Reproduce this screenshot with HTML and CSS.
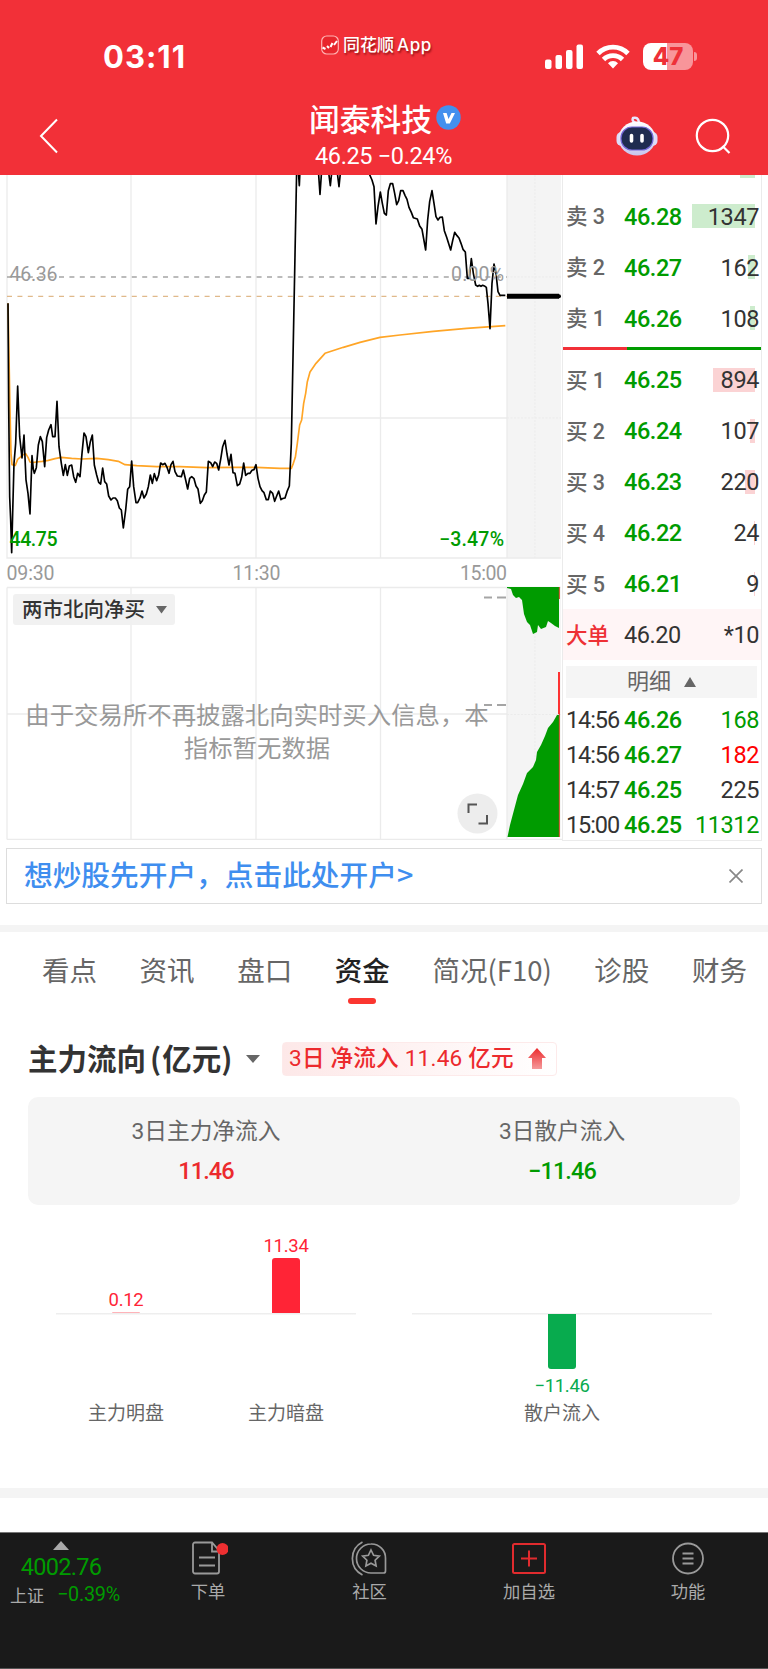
FILE: index.html
```
<!DOCTYPE html>
<html lang="zh-CN">
<head>
  <meta charset="UTF-8">
  <meta name="viewport" content="width=device-width, initial-scale=1.0">
  <title>闻泰科技</title>
  <link rel="stylesheet" href="styles.css">
</head>
<body>
  <header class="header">
    <div class="status">
      <div class="time">03:11</div>
      <div class="app-mark">
        <svg width="18" height="20" viewBox="0 0 18 20">
          <rect x="0.7" y="1" width="16.6" height="18" rx="5" fill="#e8262d" stroke="#ffb3b3" stroke-width="1.2"/>
          <path d="M1.500 12.500l3 1.500M6 11l2 2M9.500 12l2-4M13 10l3-4" fill="none" stroke="#fff" stroke-width="2"/>
        </svg>
        <span>同花顺<span class="app-word">App</span></span>
      </div>
      <div class="status-icons">
        <svg width="39" height="26" viewBox="0 0 39 26" fill="#fff">
          <rect x="0" y="15.5" width="6.5" height="9.5" rx="2"/>
          <rect x="10.5" y="11" width="6.5" height="14" rx="2"/>
          <rect x="21" y="6" width="6.5" height="19" rx="2"/>
          <rect x="31.5" y="0.5" width="6.5" height="24.5" rx="2"/>
        </svg>
        <svg class="wifi" width="34" height="25" viewBox="0 0 34 25" fill="none" stroke="#fff" stroke-width="4.8">
          <path d="M2 9.5a21 21 0 0 1 30 0"/>
          <path d="M7.5 15.500a13.4 13.4 0 0 1 19 0"/>
          <path d="M17 24.5l-5-5.3a7 7 0 0 1 10 0z" fill="#fff" stroke="none"/>
        </svg>
        <div class="battery"><span>47</span></div>
      </div>
    </div>
    <div class="nav">
      <svg class="back" width="20" height="36" viewBox="0 0 20 36"><path d="M18 1.500L2 18l16 16.500" fill="none" stroke="#fff" stroke-width="2"/></svg>
      <div class="stock">
        <div class="stock-name">闻泰科技
          <svg width="25" height="25" viewBox="0 0 25 25"><circle cx="12.500" cy="12.500" r="12.200" fill="#4390ee"/><path d="M7 8h3.600l1.900 6 3-6H19l-5.200 10.500h-3.600z" fill="#fff"/></svg>
        </div>
        <div class="stock-price">46.25 −0.24%</div>
      </div>
      <div class="nav-actions">
        <svg width="42" height="40" viewBox="0 0 42 40">
          <defs>
            <linearGradient id="shell" x1="0" y1="0" x2="0" y2="1"><stop offset="0" stop-color="#fff"/><stop offset="1" stop-color="#c8c5ee"/></linearGradient>
          </defs>
          <path d="M20 7c-3-1-4-3-3-5 3-1 5 0 6 4" fill="none" stroke="#e9e6ff" stroke-width="2.500"/>
          <rect x="0.500" y="16" width="41" height="14" rx="5" fill="#dcdcfa"/>
          <ellipse cx="21" cy="22.500" rx="18.500" ry="17" fill="url(#shell)"/>
          <rect x="5" y="11" width="32" height="23" rx="11" fill="#1f2c50" stroke="#7468d8" stroke-width="1.200"/>
          <path d="M15.500 19.500v5.500M26 19.500v5.500" stroke="#fff" stroke-width="3.600" stroke-linecap="round"/>
        </svg>
        <svg width="36" height="36" viewBox="0 0 36 36" fill="none" stroke="#fff" stroke-width="2.200"><circle cx="17.500" cy="17.500" r="15.700"/><path d="M27.500 28l7 7"/></svg>
      </div>
    </div>
  </header>

  <main>
    <section class="quote">
      <!-- y = 0 in the drawing lies 5px above the visible area -->
      <svg class="chart" width="562" height="665" viewBox="0 5 562 665">
        <rect x="507" y="5" width="54" height="383" fill="#f4f4f4"/>
        <rect x="507" y="417" width="54" height="250" fill="#f4f4f4"/>
        <g stroke="#ebebeb" stroke-width="1.300" fill="none">
          <path d="M7 0v388H561M131 0v388M256 0v388M380.500 0v388M507 0v388M7 248H507"/>
          <path d="M7 417.500H561M7 417.500V669.500M131 417v252M256 417v252M380.500 417v252M507 417v252M7 544H507M7 669.500H562"/>
          <path d="M535 5v383M535 417v250M507 248h54M507 107h54M507 544.500h54" stroke-dasharray="2 1.500" stroke-width="1"/>
        </g>
        <path d="M7 107H507" stroke="#a5a5a5" stroke-width="1.300" stroke-dasharray="5 5.400"/>
        <path d="M7 126.400H507" stroke="#e0b98a" stroke-width="1.200" stroke-dasharray="5 5.400"/>
        <path d="M507 126.300H559" stroke="#000" stroke-width="5"/><circle cx="559" cy="126.300" r="2" />
        <g transform="scale(.33333)" fill="none" stroke-width="5" stroke-linejoin="round">
          <polyline stroke="#ffa526" points="24,400 27,560 30,720 33,850 36,884 46,886 53,868 60,862 66,856 77,851 84,862 90,876 97,878 109,876 127,874 145,871 165,866 184,862 215,865 245,867 290,865 325,869 355,874 375,884 410,887 470,890 540,890 620,893 700,892 768,892 840,895 874,895 880,880 886,862 892,820 899,765 905,750 911,700 917,670 922,635 930,606 948,580 975,550 1030,532 1080,517 1140,502 1200,495 1300,484 1400,475 1516,467"/>
          <polyline stroke="#000" points="24,400 26,700 29,980 32,1050 35,1148 38,1030 42,880 47,820 53,648 59,800 66,864 72,795 78,930 84,970 90,1032 96,857 100,898 103,910 109,893 115,825 121,800 127,815 134,890 140,803 146,780 153,764 158,800 165,800 171,694 177,830 184,880 190,916 196,884 202,916 208,888 215,885 221,920 227,937 233,910 240,920 246,850 252,789 258,800 265,848 271,815 277,795 283,885 290,915 296,937 302,942 308,894 314,935 320,942 326,978 333,990 339,984 346,984 352,992 358,1014 364,1020 370,1074 377,1020 383,958 389,950 395,873 401,950 408,998 413,998 420,984 426,963 432,984 439,972 445,950 451,915 457,940 463,911 470,932 476,915 482,879 488,884 495,880 501,892 507,910 513,884 519,874 525,905 532,918 544,920 550,900 557,930 563,957 569,925 575,920 582,926 588,948 594,957 601,1000 607,992 613,975 619,966 625,874 632,878 638,890 644,876 650,880 656,900 662,868 668,830 675,811 681,852 687,885 693,853 699,908 705,910 712,947 719,942 725,922 731,879 737,916 744,910 750,910 756,901 762,899 768,884 774,925 780,950 786,962 792,968 799,989 805,989 811,963 818,970 824,994 830,978 836,963 843,989 849,985 855,984 861,965 868,948 874,820 890,0 895,0 898,47 900,0 955,0 960,73 965,0 985,0 991,47 996,0 1011,0 1017,50 1022,0 1106,0 1108,12 1116,30 1122,50 1128,162 1134,110 1141,66 1147,100 1153,130 1159,135 1165,62 1171,41 1178,41 1184,70 1190,104 1196,92 1202,62 1209,62 1215,76 1221,88 1227,112 1234,127 1240,143 1252,147 1259,168 1266,178 1277,240 1283,150 1289,95 1296,62 1302,100 1308,140 1314,150 1320,142 1327,141 1333,182 1340,202 1352,240 1358,212 1364,187 1371,197 1377,204 1383,220 1389,238 1396,246 1402,325 1408,325 1414,266 1420,310 1427,345 1433,349 1438,346 1443,349 1448,346 1455,349 1459,352 1464,400 1470,476 1476,340 1482,282 1488,310 1494,365 1500,376 1516,376"/>
        </g>
        <g class="chart-label">
          <text x="9.500" y="110.500" textLength="48">46.36</text>
          <text x="451" y="110.500" textLength="53">0.00%</text>
          <text class="down" x="9.500" y="376" textLength="48">44.75</text>
          <text class="down" x="439" y="376" textLength="65">−3.47%</text>
          <text x="6.500" y="409.500" textLength="48">09:30</text>
          <text x="232.500" y="409.500" textLength="48">11:30</text>
          <text x="460" y="409.500" textLength="47">15:00</text>
        </g>
        <!-- northbound net buying -->
        <path d="M484 427.500h8M497 427.500h9M484 535h8M497 535h9" stroke="#a5a5a5" stroke-width="1.800"/>
        <g fill="#009b00">
          <path d="M507 417H559V458L555 456 551 453 548 451 546 457 541 459 538 455 537 462 533 464 530 455 527 452 524 444 522 430 519 427 516 428 513 425 511 419 507 418z"/>
          <path d="M507.500 667L510 655 514 640 518 625 523 614 527 603 533 597 536 590 537 582 541 575 545 566 548 558 553 552 557 545H559V667z"/>
        </g>
        <path d="M559.300 417V429M559.300 544V667" stroke="#c33b12" stroke-width="1"/>
        <path d="M559 502V544" stroke="#f00" stroke-width="1.600"/>
        <rect x="13" y="424" width="162" height="31" rx="3" fill="#f0f0f0" fill-opacity=".9"/>
        <text class="pill-text" x="22" y="447">两市北向净买</text>
        <path d="M156 436h11l-5.500 7.500z" fill="#666"/>
        <g class="notice-text">
          <text x="257" y="553.500">由于交易所不再披露北向实时买入信息，本</text>
          <text x="257" y="587">指标暂无数据</text>
        </g>
        <circle cx="477.500" cy="643.500" r="20" fill="#ededed"/>
        <path d="M468.500 643v-8.500h8.500M487 645v8.500h-8.500" fill="none" stroke="#555" stroke-width="2"/>
      </svg>

      <div class="book">
        <div class="row row-cut"><i style="width:15px"></i></div>
        <div class="row sell"><span>卖 3</span><b>46.28</b><em>1347</em><i style="width:63px"></i></div>
        <div class="row sell"><span>卖 2</span><b>46.27</b><em>162</em><i style="width:7px"></i></div>
        <div class="row sell"><span>卖 1</span><b>46.26</b><em>108</em><i style="width:5px"></i></div>
        <div class="ratio"></div>
        <div class="row buy"><span>买 1</span><b>46.25</b><em>894</em><i style="width:42px"></i></div>
        <div class="row buy"><span>买 2</span><b>46.24</b><em>107</em><i style="width:5px"></i></div>
        <div class="row buy"><span>买 3</span><b>46.23</b><em>220</em><i style="width:10px"></i></div>
        <div class="row buy"><span>买 4</span><b>46.22</b><em>24</em><i style="width:1px"></i></div>
        <div class="row buy"><span>买 5</span><b>46.21</b><em>9</em><i style="width:1px"></i></div>
        <div class="row big"><span>大单</span><b>46.20</b><em>*10</em></div>
        <div class="detail-head">明细 <svg width="12" height="10" viewBox="0 0 12 10"><path d="M6 0l6 10H0z" fill="#666"/></svg></div>
        <div class="tick"><span>14:56</span><b>46.26</b><em class="down">168</em></div>
        <div class="tick"><span>14:56</span><b>46.27</b><em class="up">182</em></div>
        <div class="tick"><span>14:57</span><b>46.25</b><em>225</em></div>
        <div class="tick"><span>15:00</span><b>46.25</b><em class="down">11312</em></div>
      </div>
    </section>

    <div class="promo">
      <span>想炒股先开户，点击此处开户&gt;</span>
      <svg width="14" height="14" viewBox="0 0 14 14"><path d="M.5.500l13 13M13.500.500l-13 13" stroke="#888" stroke-width="1.700"/></svg>
    </div>

    <nav class="tabs">
      <a>看点</a><a>资讯</a><a>盘口</a><a class="active">资金</a><a>简况(F10)</a><a>诊股</a><a>财务</a>
    </nav>

    <section class="flow">
      <div class="flow-head">
        <h2>主力流向<span class="paren">(</span>亿元<span class="paren">)</span></h2>
        <svg width="14" height="8" viewBox="0 0 14 8"><path d="M0 0h14L7 8z" fill="#666"/></svg>
        <div class="flow-tag">
          <span>3日 净流入 11.46 亿元</span>
          <svg width="18" height="22" viewBox="0 0 18 22">
            <defs><linearGradient id="rise" x1="0" y1="0" x2="0" y2="1"><stop offset="0" stop-color="#ec2a2d"/><stop offset="1" stop-color="#f59a9b"/></linearGradient></defs>
            <path d="M9 0l9 10h-4v11H4V10H0z" fill="url(#rise)"/>
          </svg>
        </div>
      </div>
      <div class="summary">
        <div><p>3日主力净流入</p><strong class="rise">11.46</strong></div>
        <div><p>3日散户流入</p><strong class="down">−11.46</strong></div>
      </div>
      <div class="bars">
        <div class="bar-group">
          <div class="bar-col">
            <div class="above"><span>0.12</span><div class="bar tiny"></div></div>
            <div class="below"></div>
            <label>主力明盘</label>
          </div>
          <div class="bar-col">
            <div class="above"><span>11.34</span><div class="bar" style="height:55px"></div></div>
            <div class="below"></div>
            <label>主力暗盘</label>
          </div>
        </div>
        <div class="bar-group">
          <div class="bar-col">
            <div class="above"></div>
            <div class="below"><div class="bar" style="height:55px"></div><span>−11.46</span></div>
            <label>散户流入</label>
          </div>
        </div>
      </div>
    </section>
  </main>

  <footer class="bottom">
    <div class="index">
      <svg width="16" height="9" viewBox="0 0 16 9"><path d="M8 0l8 9H0z" fill="#aaa"/></svg>
      <div class="index-value">4002.76</div>
      <div class="index-line"><span>上证</span><b>−0.39%</b></div>
    </div>
    <div class="menu">
      <svg width="40" height="36" viewBox="0 0 40 36" fill="none" stroke="#999" stroke-width="1.800">
        <path d="M7 2.500h17l7 8v21a2 2 0 0 1-2 2H7a2 2 0 0 1-2-2v-27a2 2 0 0 1 2-2zM24 2.500v9h7M11 17.500h16M11 25.500h16"/>
        <circle cx="34.500" cy="9" r="6" fill="#ee2f31" stroke="none"/>
      </svg>
      <span>下单</span>
    </div>
    <div class="menu">
      <svg width="40" height="36" viewBox="0 0 40 36" fill="none" stroke="#999" stroke-width="1.700">
        <path d="M21 4a14 14 0 0 1 14.500 14.500V31a2 2 0 0 1-2 2H21A14.500 14.500 0 0 1 21 4z"/>
        <path d="M12.500 2C-1 9-1 28 12.500 35"/>
        <path d="M21 10l2.600 5.300 5.700.800-4.200 4.100 1 5.800-5.100-2.800-5.100 2.800 1-5.800-4.200-4.100 5.700-.800z"/>
      </svg>
      <span>社区</span>
    </div>
    <div class="menu">
      <svg width="40" height="36" viewBox="0 0 40 36" fill="none" stroke="#e02b2e" stroke-width="2">
        <rect x="4" y="4" width="32" height="29" rx="1.500"/><path d="M20 10.500v16M12 18.500h16"/>
      </svg>
      <span>加自选</span>
    </div>
    <div class="menu">
      <svg width="40" height="36" viewBox="0 0 40 36" fill="none" stroke="#999" stroke-width="1.800">
        <circle cx="20" cy="18.500" r="15"/><path d="M14.500 13.500h11M14.500 18.500h11M14.500 23.500h11"/>
      </svg>
      <span>功能</span>
    </div>
  </footer>
</body>
</html>
```
FILE: styles.css
```
:root {
  --red: #f23038;
  --up: #f00;
  --down: #009b00;
  --text: #333;
  --muted: #666;
  --line: #ebebeb;
  --cjk: "Noto Sans CJK SC", sans-serif;
  --num: Roboto, "Noto Sans CJK SC", sans-serif;
}

* {
  box-sizing: border-box;
  margin: 0;
  padding: 0;
}

body {
  width: 768px;
  height: 1669px;
  overflow: hidden;
  display: flex;
  flex-direction: column;
  font-family: var(--cjk);
  color: var(--text);
  background: #fff;
}

svg {
  display: block;
  flex: none;
}

em, i {
  font-style: normal;
}

.up { color: var(--up); }
.rise { color: #ec2a2d; }
.down { color: var(--down); fill: var(--down); }

/* header */
.header {
  height: 175px;
  flex: none;
  background: var(--red);
  color: #fff;
}

.status {
  height: 94px;
  display: grid;
  grid-template-columns: 321px 1fr 223px;
  align-items: start;
}

.time {
  padding: 38px 0 0 103px;
  font: 700 31px/38px Inter, sans-serif;
  letter-spacing: 1px;
}

.app-mark {
  display: flex;
  align-items: center;
  gap: 4px;
  padding-top: 32px;
  font-size: 17px;
  line-height: 24px;
  font-weight: 500;
  text-shadow: 1px 2px 2px rgba(90, 0, 0, 0.6);
}

.app-word {
  margin-left: 3px;
  font-family: Inter, sans-serif;
  letter-spacing: 0.600px;
}

.status-icons {
  display: flex;
  align-items: center;
  padding-top: 43px;
}

.wifi {
  margin: 0 13px 0 12px;
}

.battery {
  position: relative;
  width: 50px;
  height: 27px;
  border-radius: 8px;
  background: linear-gradient(to right, #fff 47%, #f8959a 47%);
  color: #ee3038;
  font: 800 24px/28px Inter, sans-serif;
  text-align: center;
}

.battery::after {
  content: "";
  position: absolute;
  right: -4px;
  top: 9px;
  width: 3px;
  height: 9px;
  border-radius: 0 3px 3px 0;
  background: #f8959a;
}

.nav {
  display: grid;
  grid-template-columns: 210px 350px 1fr;
  align-items: start;
}

.back {
  margin: 24px 0 0 39px;
}

.stock {
  display: flex;
  flex-direction: column;
  align-items: center;
}

.stock-name {
  display: flex;
  align-items: center;
  gap: 4px;
  font-size: 30.800px;
  line-height: 47px;
  font-weight: 500;
}

.stock-price {
  margin: 0 3px 0 0;
  font: 450 23.500px/30px var(--num);
  letter-spacing: -0.350px;
}

.nav-actions {
  display: flex;
  align-items: center;
  gap: 37px;
  padding: 22px 0 0 56px;
}

/* quote */
.quote {
  display: flex;
  height: 666px;
}

.chart-label {
  font-family: Roboto, sans-serif;
  font-size: 19.500px;
  font-weight: 450;
  fill: #999;
}

.chart-label .down {
  fill: var(--down);
  font-weight: 500;
}

.pill-text {
  font-size: 20.500px;
  font-weight: 500;
  fill: #333;
}

.notice-text {
  font-size: 24.400px;
  fill: #999;
  text-anchor: middle;
}

.book {
  width: 200px;
  border: solid var(--line);
  border-width: 0 1.500px 1px 1px;
  overflow: hidden;
  font-family: var(--num);
  font-size: 23.500px;
}

.row {
  position: relative;
  height: 51px;
  display: grid;
  grid-template-columns: 58px 1fr auto;
  align-items: center;
  padding: 0 2px 0 3px;
  line-height: 53px;
}

.row.sell {
  line-height: 54px;
}

.row span {
  font-size: 21.500px;
  font-weight: 500;
  color: var(--muted);
  white-space: nowrap;
}

.row b, .tick b {
  font-weight: 500;
  letter-spacing: -0.450px;
  color: var(--down);
}

.row em, .tick em {
  position: relative;
  z-index: 1;
  letter-spacing: -0.400px;
  font-weight: 450;
}

/* volume bar behind the quantity */
.row i {
  position: absolute;
  right: 6px;
  top: 14px;
  height: 24px;
  background: #cdeccd;
}

.row.buy i {
  background: #fbd3d4;
}

.row-cut {
  height: 15px;
}

.row-cut i {
  top: 0;
  height: 3px;
}

.ratio {
  height: 3.500px;
  margin: 3.500px 0;
  background: linear-gradient(to right, var(--red) 32.500%, var(--down) 32.500%);
}

.row.big {
  background: #fff5f6;
}

.row.big span {
  color: #ee3035;
}

.row.big b {
  color: var(--text);
  font-weight: 450;
}

.detail-head {
  height: 32px;
  margin: 6px 4px 3px 3px;
  display: flex;
  align-items: center;
  justify-content: center;
  gap: 13px;
  background: #f5f5f5;
  color: var(--muted);
  font-size: 22px;
  line-height: 32px;
}

.tick {
  height: 35px;
  line-height: 38px;
  display: grid;
  grid-template-columns: 58px 1fr auto;
  padding: 0 2px 0 3px;
}

.tick span {
  font-weight: 450;
  letter-spacing: -1.100px;
}

.tick em:not(.up):not(.down) {
  color: var(--text);
}

/* promo */
.promo {
  margin: 7px 6px 0;
  height: 56px;
  padding: 0 18px 0 17px;
  border: 1px solid #ddd;
  display: flex;
  align-items: center;
  justify-content: space-between;
  font-size: 28.700px;
  line-height: 50px;
  font-weight: 500;
  color: #3f8eef;
}

.promo span {
  height: 54px;
}

/* tabs */
.tabs {
  margin-top: 21px;
  border-top: 7px solid #f4f4f4;
  height: 90px;
  padding: 17px 21px 0 42px;
  display: flex;
  justify-content: space-between;
  font-size: 27.500px;
  line-height: 40px;
  color: var(--muted);
}

.tabs a.active {
  color: #222;
  font-weight: 500;
}

.tabs a.active::after {
  content: "";
  display: block;
  width: 28px;
  height: 6px;
  margin: 9px auto 0;
  border-radius: 3px;
  background: #fb3630;
}

/* fund flow */
.flow {
  padding: 27px 28px 0;
}

.flow-head {
  display: flex;
  align-items: center;
  height: 34px;
}

.flow-head h2 {
  width: 204px;
  height: 34px;
  margin-right: 14px;
  font-size: 29.500px;
  line-height: 30px;
  white-space: nowrap;
  color: #333;
}

.paren {
  margin: 0 1px 0 4px;
}

.flow-head h2 .paren:last-child {
  margin: 0;
}

.flow-tag {
  margin-left: 22px;
  width: 275px;
  height: 34px;
  padding: 0 10px 0 6px;
  display: flex;
  align-items: center;
  justify-content: space-between;
  border: 1px solid #fdeaea;
  border-radius: 4px;
  background: linear-gradient(to right, #fde8e8, #fff);
  color: #ec2a2d;
  font-family: var(--num);
  font-size: 22.600px;
  line-height: 32px;
  letter-spacing: 0.200px;
  font-weight: 450;
  white-space: nowrap;
}

.summary {
  margin-top: 21px;
  height: 108px;
  border-radius: 10px;
  background: #f5f5f5;
  display: grid;
  grid-template-columns: 1fr 1fr;
  text-align: center;
  padding-top: 18px;
}

.summary p {
  font-family: var(--num);
  font-size: 22.700px;
  line-height: 34px;
  color: var(--muted);
}

.summary strong {
  display: block;
  margin-top: 5px;
  font: 500 23.500px/34px var(--num);
  letter-spacing: -0.900px;
}

.bars {
  margin: 28px 28px 0;
  display: grid;
  grid-template-columns: 300px 300px;
  gap: 56px;
}

.bar-group {
  display: flex;
  justify-content: space-between;
  padding: 0 20px;
  background: linear-gradient(#eee, #eee) 0 80px / 100% 1.500px no-repeat;
}

.bar-group + .bar-group {
  justify-content: center;
}

.bar-col {
  width: 100px;
  display: flex;
  flex-direction: column;
  align-items: center;
  font: 450 18.500px/22px var(--num);
  letter-spacing: -0.300px;
}

.above {
  height: 80px;
  display: flex;
  flex-direction: column;
  justify-content: flex-end;
  align-items: center;
  color: #ff2436;
}

.above span {
  margin-bottom: 1px;
}

.bar {
  width: 28px;
  border-radius: 3px 3px 0 0;
  background: #ff2436;
}

.bar.tiny {
  height: 1px;
  opacity: .35;
}

.below {
  height: 86px;
  padding-top: 1px;
  display: flex;
  flex-direction: column;
  align-items: center;
  color: #08ab4e;
}

.below .bar {
  margin-bottom: 6px;
  border-radius: 0 0 3px 3px;
  background: #08ab4e;
}

.bar-col label {
  font: 400 19px/26px var(--cjk);
  letter-spacing: 0;
  color: var(--muted);
}

/* bottom bar */
.bottom {
  margin-top: auto;
  height: 181px;
  flex: none;
  border-top: 10px solid #f4f4f4;
  background: linear-gradient(#fff 34px, #777 34px, #777 35px, #1a1a1a 35px, #1a1a1a 170px, #555 170px);
  display: grid;
  grid-template-columns: 122px 172px 151px 168px 150px;
}

.index {
  padding-top: 43px;
  display: flex;
  flex-direction: column;
  align-items: center;
  color: var(--down);
}

.index-value {
  margin-top: 3px;
  font: 450 23.500px/29px var(--num);
  letter-spacing: -0.700px;
}

.index-line {
  display: flex;
  align-items: center;
  gap: 13px;
  margin-left: 8px;
  line-height: 26px;
}

.index-line span {
  font-size: 17px;
  color: #aaa;
}

.index-line b {
  font: 450 19.800px/26px var(--num);
  letter-spacing: -0.200px;
}

.menu {
  padding-top: 42px;
  display: flex;
  flex-direction: column;
  align-items: center;
  font-size: 17.300px;
  line-height: 29px;
  color: #aaa;
}
```
